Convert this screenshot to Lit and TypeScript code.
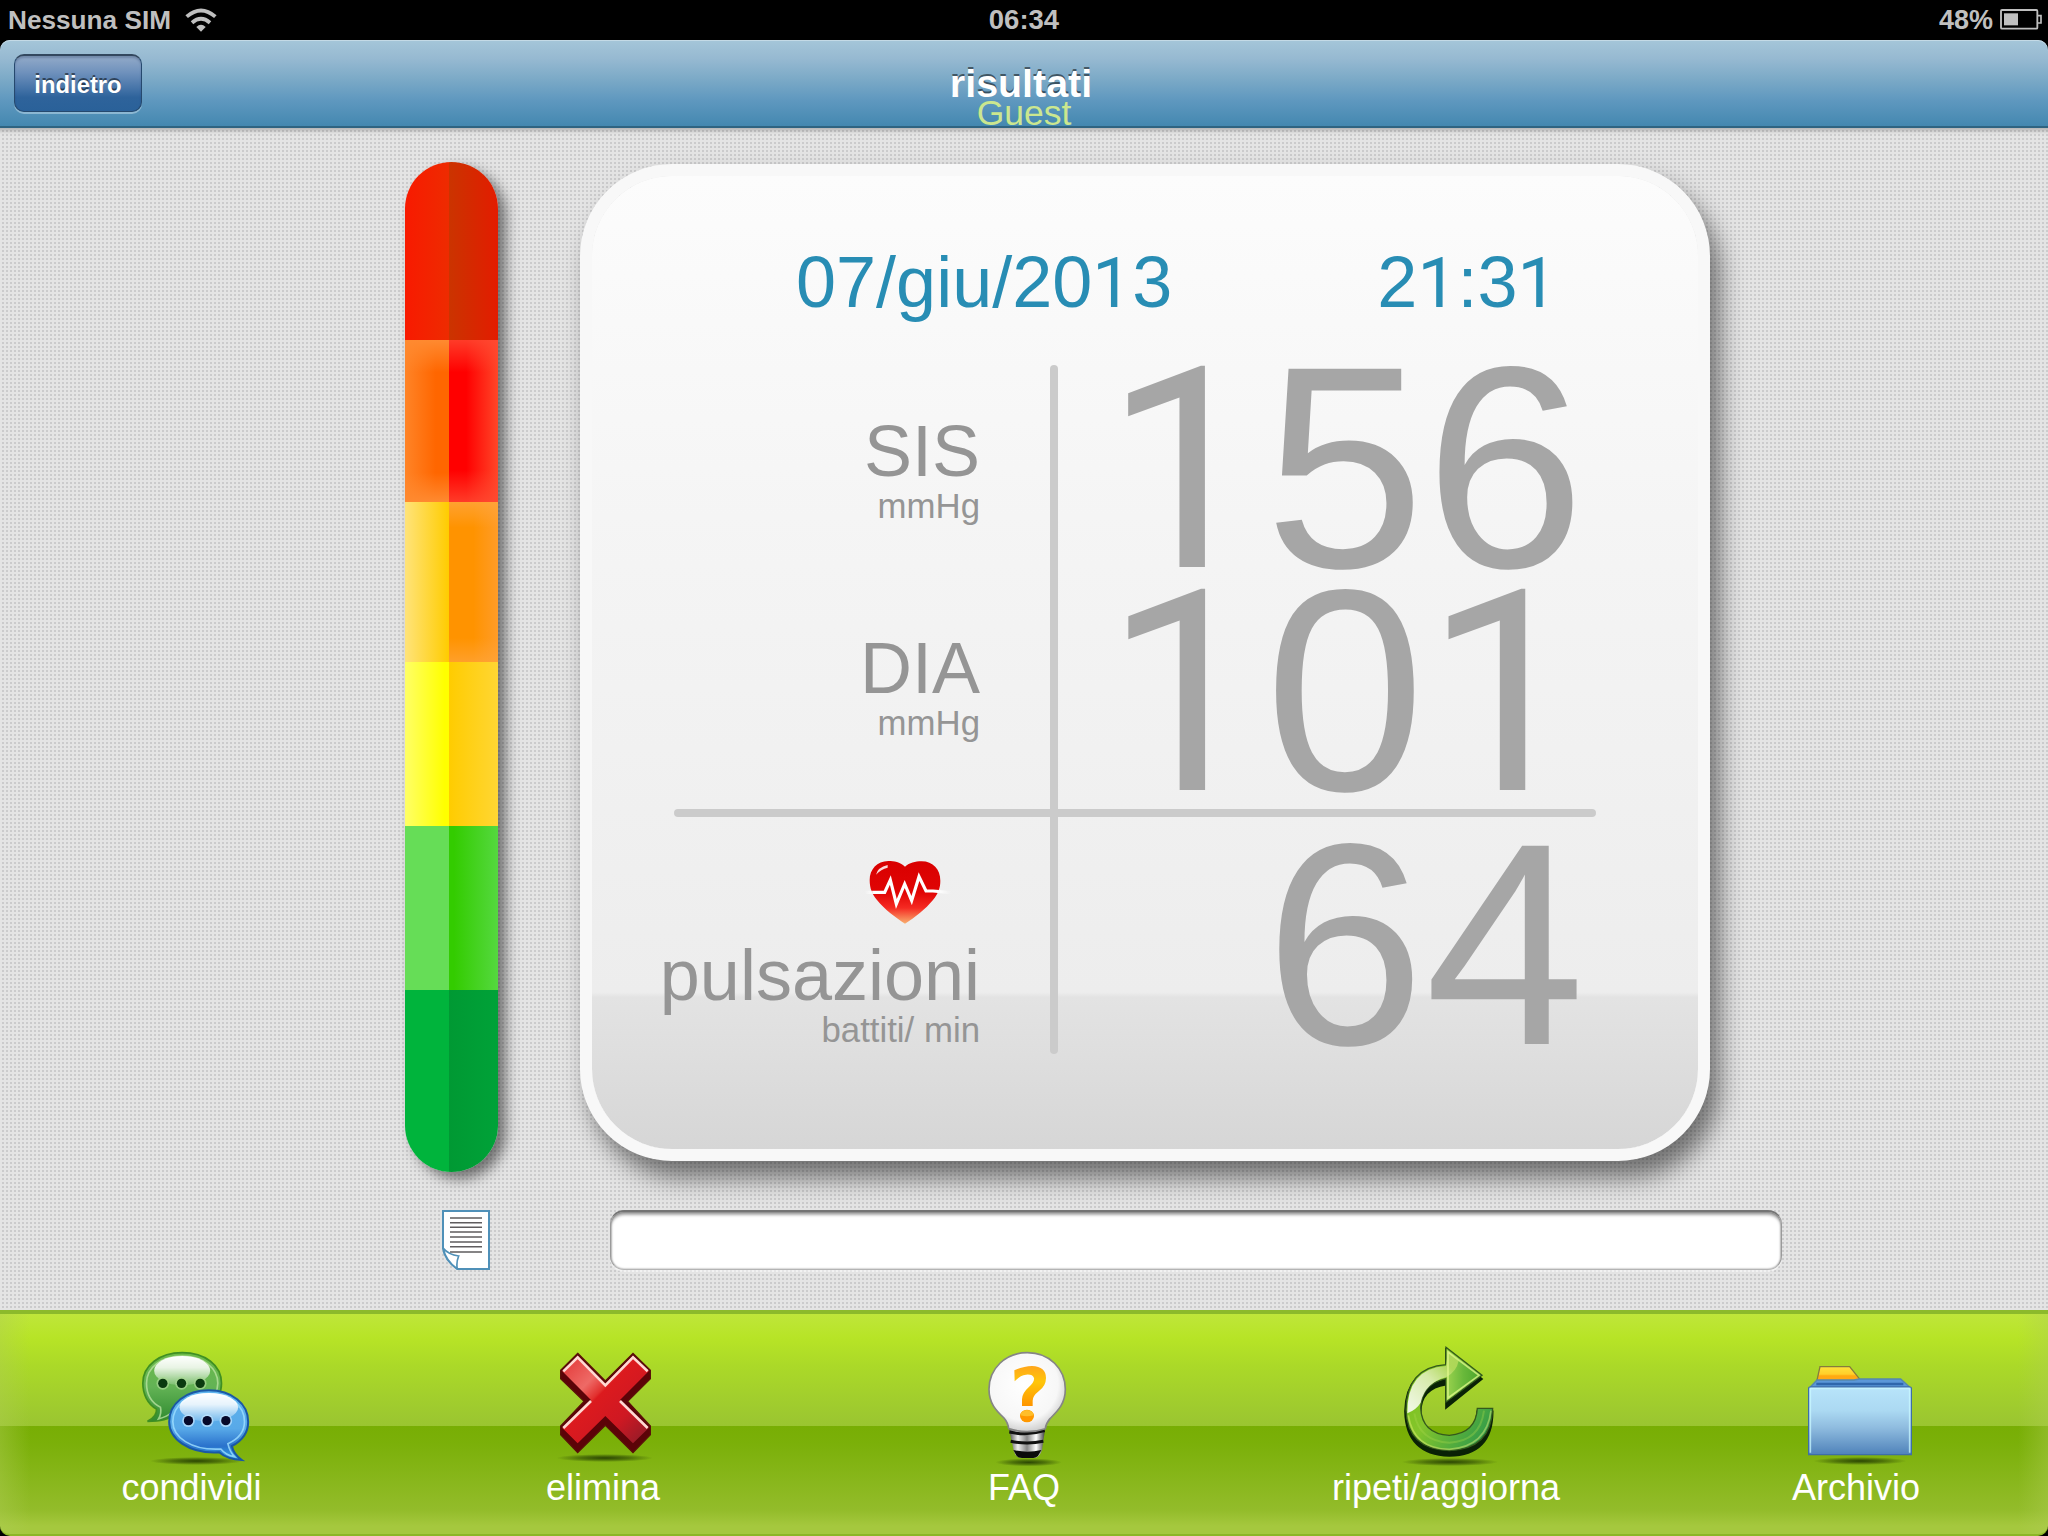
import { LitElement, html, css, svg, type TemplateResult } from "lit";
import { customElement, property } from "lit/decorators.js";

const SANS = css`"Liberation Sans", Arial, Helvetica, sans-serif`;

/** Sets the digit one in a face that draws it without a foot. */
const figures = (text: string): TemplateResult =>
  html`${[...text].map((c) => (c === "1" ? html`<span class="one">1</span>` : c))}`;

@customElement("status-bar")
class StatusBar extends LitElement {
  static styles = css`
    :host {
      display: grid;
      grid-template-columns: 1fr auto 1fr;
      align-items: center;
      height: 40px;
      background: #000;
      color: #bfbfbf;
      font: bold 26.2px/40px ${SANS};
      padding: 0 6px 0 8px;
      box-sizing: border-box;
    }
    .side { display: flex; align-items: center; }
    .right { justify-content: flex-end; font-size: 27px; }
    .clock { font-size: 27.5px; line-height: 38px; margin-right: 2px; }
    .wifi { width: 32px; height: 24px; margin-left: 14px; }
    .battery { width: 42px; height: 21px; margin-left: 7px; margin-top: -2px; }
  `;
  render() {
    return html`
      <div class="side">
        <span>Nessuna SIM</span>
        <svg class="wifi" viewBox="558 22 96 72" fill="none" stroke="#bfbfbf" stroke-width="11.5">
          <path d="M563 48 Q606 11 649 48" />
          <path d="M579 66 Q606 43 633 66" />
          <path d="M606 93 L592 79 Q606 66 620 79Z" fill="#bfbfbf" stroke="none" />
        </svg>
      </div>
      <div class="clock">06:34</div>
      <div class="side right">
        <span>48%</span>
        <svg class="battery" viewBox="456 26 126 63">
          <rect x="459" y="29" width="109" height="56" rx="3" fill="none" stroke="#bfbfbf" stroke-width="5.5" />
          <rect x="468" y="39" width="42" height="36" fill="#bfbfbf" />
          <path d="M570 46h9v22h-9" fill="none" stroke="#bfbfbf" stroke-width="5" />
        </svg>
      </div>
    `;
  }
}

@customElement("nav-bar")
class NavBar extends LitElement {
  static styles = css`
    :host { display: block; background: #000; }
    .bar {
      display: grid;
      grid-template-columns: 1fr auto 1fr;
      height: 88px;
      box-sizing: border-box;
      padding: 0 20px 0 14px;
      border-radius: 10px 10px 0 0;
      border-bottom: 2px solid #2f6481;
      background: linear-gradient(#a5c6d9 0%, #96b9d1 22%, #7caac7 45%, #5f98bf 70%, #4488b0 100%);
      box-shadow: inset 0 1px 0 #c4dae6;
      font-family: ${SANS};
    }
    .back {
      justify-self: start;
      margin-top: 14px;
      width: 128px;
      height: 58px;
      padding: 2px 0 0;
      border: 1px solid #26496e;
      border-top: 2px solid #33485f;
      border-radius: 10px;
      background: linear-gradient(#93abc9 0%, #6f91bc 30%, #4775a9 58%, #2e639b 75%, #2a6199 100%);
      box-shadow: 0 2px 0 rgba(180, 210, 228, 0.6), inset 0 2px 2px rgba(20, 40, 80, 0.25);
      color: #fff;
      font: bold 23.8px/48px ${SANS};
      text-shadow: 0 -2px 0 rgba(0, 0, 0, 0.5);
    }
    .heading { display: flex; flex-direction: column; align-items: center; padding-top: 19px; }
    .title {
      margin: 0;
      color: #fff;
      font-size: 39.4px;
      line-height: 48px;
      font-weight: bold;
      text-shadow: 0 -2px 0 rgba(0, 0, 0, 0.5);
    }
    .user { margin: -12px -6px 0 0; color: #cbe78f; font-size: 35.5px; line-height: 36px; }
  `;
  render() {
    return html`<div class="bar">
      <button class="back">indietro</button>
      <div class="heading">
        <h1 class="title">risultati</h1>
        <div class="user">Guest</div>
      </div>
    </div>`;
  }
}

@customElement("pressure-scale")
class PressureScale extends LitElement {
  static styles = css`
    :host { display: block; width: 93px; height: 1010px; }
    .scale {
      display: grid;
      grid-template-rows: 178px 162px 160px 164px 164px 182px;
      height: 100%;
      border-radius: 47px;
      overflow: hidden;
    }
    .frame { height: 100%; border-radius: 47px; box-shadow: 8px 7px 13px rgba(0, 0, 0, 0.5); }
    .band { display: grid; grid-template-columns: 44px 49px; }
    .b1 .l { background: linear-gradient(90deg, #f81a00, #ee2b00); }
    .b1 .r { background: linear-gradient(90deg, #cb3400, #d42a00 40%, #e31c00); }
    .b2 .l {
      background:
        linear-gradient(#ff8a30, transparent 20% 82%, #ff8a30),
        linear-gradient(90deg, #ff8427, #ff6600 70%);
    }
    .b2 .r {
      background:
        linear-gradient(rgba(255, 74, 50, 0.8), transparent 20% 80%, rgba(255, 74, 50, 0.8)),
        linear-gradient(90deg, #ff0000 35%, #ff4628);
    }
    .b3 .l { background: linear-gradient(90deg, #ffe37a, #ffcc00); }
    .b3 .r {
      background:
        linear-gradient(rgba(255, 165, 60, 0.8), transparent 16% 85%, rgba(255, 165, 60, 0.7)),
        linear-gradient(90deg, #ff9300 50%, #ff9c28);
    }
    .b4 .l { background: linear-gradient(90deg, #ffff66, #ffff00 90%); }
    .b4 .r { background: linear-gradient(90deg, #ffcc00, #ffd633); }
    .b5 .l { background: #66dd57; }
    .b5 .r { background: linear-gradient(90deg, #33cc00 10%, #55d83f); }
    .b6 .l { background: #00b43c; }
    .b6 .r { background: linear-gradient(90deg, #009933, #00a238); }
  `;
  render() {
    return html`<div class="frame">
      <div class="scale">
        ${[1, 2, 3, 4, 5, 6].map(
          (n) => html`<div class="band b${n}"><div class="l"></div><div class="r"></div></div>`
        )}
      </div>
    </div>`;
  }
}

@customElement("result-card")
class ResultCard extends LitElement {
  static styles = css`
    :host { display: block; width: 1130px; height: 997px; }
    .card {
      box-sizing: border-box;
      height: 100%;
      padding: 58px 82px 0;
      border: 12px solid #f8f8f8;
      border-radius: 92px;
      background: linear-gradient(#fcfcfc 0%, #f4f4f4 40%, #ededed 83.9%, #e3e3e3 84.4%, #d6d6d6 100%) padding-box;
      background-color: #f8f8f8;
      box-shadow: 10px 17px 24px rgba(0, 0, 0, 0.5);
      font-family: ${SANS};
    }
    .one { font-family: Roboto, "Liberation Sans", sans-serif; font-size: 0.978em; line-height: 0; letter-spacing: 0.006em; }
    .when {
      display: flex;
      height: 131px;
      padding-left: 122px;
      gap: 205px;
      color: #288db4;
      font-size: 72px;
      line-height: 96px;
    }
    .grid {
      display: grid;
      grid-template-columns: 376px 8px 538px;
      grid-template-rows: 444px 8px 237px;
    }
    .vertical, .horizontal { background: #cbcbcb; border-radius: 4px; }
    .vertical { grid-area: 1 / 2 / 4 / 3; }
    .horizontal { grid-area: 2 / 1 / 3 / 4; }
    .labels { padding-right: 70px; text-align: right; color: #959595; white-space: nowrap; }
    .labels.top { grid-area: 1 / 1; padding-top: 50px; }
    .labels.bottom { grid-area: 3 / 1; padding-top: 40px; margin-left: -40px; }
    .metric { height: 217px; }
    .name { font-size: 72px; line-height: 72px; }
    .unit { font-size: 34.8px; line-height: 36px; margin: 1px 0 0 0; }
    .heart { display: block; width: 88px; height: 70px; margin: 0 29px 12px auto; }
    .values { padding-right: 11px; text-align: right; color: #a6a6a6; font-size: 288px; line-height: 223px; }
    .values.top { grid-area: 1 / 3; margin-top: -9px; }
    .values.bottom { grid-area: 3 / 3; line-height: 254px; }
  `;
  render() {
    return html`<div class="card">
      <div class="when"><span>${figures("07/giu/2013")}</span><span>${figures("21:31")}</span></div>
      <div class="grid">
        <div class="vertical"></div>
        <div class="horizontal"></div>
        <div class="labels top">
          <div class="metric"><div class="name">SIS</div><div class="unit">mmHg</div></div>
          <div class="metric"><div class="name">DIA</div><div class="unit">mmHg</div></div>
        </div>
        <div class="values top"><div>${figures("156")}</div><div>${figures("101")}</div></div>
        <div class="labels bottom">
          <svg class="heart" viewBox="670 231 264 210">
            <defs>
              <linearGradient id="h" x1="0" y1="0" x2="0" y2="1">
                <stop offset="0" stop-color="#d90000" /><stop offset=".5" stop-color="#e00505" />
                <stop offset=".75" stop-color="#f52a22" /><stop offset="1" stop-color="#f9b070" />
              </linearGradient>
              <linearGradient id="p" gradientUnits="userSpaceOnUse" x1="676" y1="0" x2="934" y2="0">
                <stop offset="0" stop-color="#fff" stop-opacity="0" /><stop offset=".1" stop-color="#fff" />
                <stop offset=".85" stop-color="#fff" /><stop offset="1" stop-color="#fff" stop-opacity="0" />
              </linearGradient>
            </defs>
            <path d="M796 260C780 246 764 243 746 243C712 244 690 268 690 300C690 325 697 342 712 360C735 388 766 412 796 431C828 411 857 388 880 360C896 340 902 324 902 302C902 268 880 244 846 244C826 244 810 248 796 260Z" fill="url(#h)" />
            <path d="M709 284Q714 262 744 255L744 263Q724 268 709 284Z" fill="#fff" opacity=".85" />
            <path d="M676 337H735L752 300L770 372L795 312L816 362L838 290L859 333H880L934 338" fill="none" stroke="url(#p)" stroke-width="9.5" />
          </svg>
          <div class="name">pulsazioni</div>
          <div class="unit">battiti/ min</div>
        </div>
        <div class="values bottom">${figures("64")}</div>
      </div>
    </div>`;
  }
}

const ground = (cx: number, cy: number, rx: number) => svg`
  <defs><radialGradient id="g"><stop offset="0" stop-color="#1c3300" stop-opacity=".85"/><stop offset=".5" stop-color="#1c3300" stop-opacity=".5"/><stop offset="1" stop-color="#1c3300" stop-opacity="0"/></radialGradient></defs>
  <ellipse cx=${cx} cy=${cy} rx=${rx} ry="12" fill="url(#g)"/>`;

const dots = (xs: number[], y: number, halo: string, ink: string) =>
  xs.map((x) => svg`<circle cx=${x} cy=${y} r="19" fill=${halo} opacity=".75"/><circle cx=${x} cy=${y} r="14" fill=${ink}/>`);

const art: Record<string, TemplateResult> = {
  share: html`<svg class="art" viewBox="400.5 129 348 372">
    ${ground(588, 483, 140)}
    <defs>
      <linearGradient id="cg" x1="0" y1="0" x2="0" y2="1"><stop offset="0" stop-color="#6cba4a" /><stop offset=".5" stop-color="#63b355" /><stop offset="1" stop-color="#2f8a30" /></linearGradient>
      <linearGradient id="cb" x1="0" y1="0" x2="0" y2="1"><stop offset="0" stop-color="#5fb4ee" /><stop offset=".55" stop-color="#58a9e8" /><stop offset=".8" stop-color="#2a72cc" /><stop offset="1" stop-color="#35a8e8" /></linearGradient>
      <linearGradient id="cw" x1="0" y1="0" x2="0" y2="1"><stop offset="0" stop-color="#fff" /><stop offset=".4" stop-color="#fff" stop-opacity=".85" /><stop offset="1" stop-color="#fff" stop-opacity=".15" /></linearGradient>
    </defs>
    <path d="M545 158C614 158 663 196 663 250C663 308 610 345 520 345Q500 364 441 364Q470 350 468 327C440 312 427 280 427 250C427 196 478 158 545 158Z" fill="url(#cg)" stroke="#3f8f22" stroke-width="5" />
    <path d="M545 168C606 168 652 203 652 250C652 300 600 334 515 336Q500 350 474 357Q484 340 480 322C450 307 438 280 438 250C438 202 484 168 545 168Z" fill="none" stroke="#bfe6a4" stroke-width="5" opacity=".75" />
    <ellipse cx="545" cy="212" rx="84" ry="44" fill="url(#cw)" />
    ${dots([487, 543, 599], 250, "#a5d691", "#0a3a10")}
    <path d="M625 271C694 271 743 311 743 365C743 397 725 422 694 438Q700 464 724 480Q680 478 656 457C562 462 506 415 506 365C506 311 556 271 625 271Z" fill="url(#cb)" stroke="#1a58a5" stroke-width="6" />
    <path d="M625 281C688 281 732 316 732 365C732 393 713 417 682 431Q688 456 702 470Q676 466 661 447C570 452 517 410 517 365C517 316 562 281 625 281Z" fill="none" stroke="#9fe0ff" stroke-width="5" opacity=".8" />
    <ellipse cx="625" cy="322" rx="88" ry="43" fill="url(#cw)" />
    ${dots([564, 620, 676], 362, "#bfe3ff", "#06092a")}
  </svg>`,
  delete: html`<svg class="art" viewBox="135 129 348 372">
    ${ground(314, 474, 145)}
    <defs>
      <linearGradient id="x" x1="0" y1="0" x2="1" y2="1"><stop offset="0" stop-color="#e23434" /><stop offset=".3" stop-color="#ee6a66" /><stop offset=".42" stop-color="#e2302e" /><stop offset=".44" stop-color="#dc1a1e" /><stop offset=".7" stop-color="#cf1822" /><stop offset="1" stop-color="#8a1c2a" /></linearGradient>
    </defs>
    <path d="M233 160L316 243L399 160L451 211V236L383 304L451 378V404L399 458L316 376L233 458L182 404V378L252 304L182 236V211Z" fill="#5c0308" stroke="#5a1208" stroke-width="4" />
    <path d="M233 168L316 251L399 168L446 214L360 300L446 384L399 430L316 348L233 430L187 384L273 300L187 214Z" fill="url(#x)" />
    <path d="M190 214L233 172L316 256L399 172L443 214M360 303L443 384M273 303L190 384" fill="none" stroke="#ffd9d3" stroke-width="8" />
  </svg>`,
  faq: html`<svg class="art" viewBox="78 129 348 372">
    ${ground(266, 487, 100)}
    <defs>
      <radialGradient id="b" cx=".45" cy=".4" r=".65"><stop offset="0" stop-color="#fff" /><stop offset=".7" stop-color="#f7f7f7" /><stop offset="1" stop-color="#c4c4c4" /></radialGradient>
      <linearGradient id="s" x1="0" y1="0" x2="1" y2="0"><stop offset="0" stop-color="#444" /><stop offset=".25" stop-color="#eee" /><stop offset=".5" stop-color="#888" /><stop offset=".75" stop-color="#fff" /><stop offset="1" stop-color="#333" /></linearGradient>
      <linearGradient id="q" x1="0" y1="0" x2="0" y2="1"><stop offset="0" stop-color="#ffa61a" /><stop offset=".4" stop-color="#ffc60a" /><stop offset="1" stop-color="#ff9500" /></linearGradient>
    </defs>
    <path d="M206 382H316L306 450Q298 474 280 474H245Q228 474 222 455Z" fill="url(#s)" />
    <path d="M208 396Q262 408 314 392M212 424Q262 434 310 424" fill="none" stroke="#111" stroke-width="9" />
    <path d="M220 450Q262 460 304 450L294 468Q288 474 280 474H246Q234 474 230 468Z" fill="#0b0b0b" />
    <path d="M262 158C328 158 376 206 376 268C376 312 352 334 330 356Q318 370 316 386Q262 404 206 386Q204 368 192 354C168 332 147 310 147 268C147 206 196 158 262 158Z" fill="url(#b)" stroke="#858585" stroke-width="5" />
    <path d="M223 211Q252 198 276 198Q318 200 318 234Q318 258 296 274Q278 288 278 302V318H246V298Q246 280 266 262Q284 246 282 234Q278 222 258 224Q240 226 224 244Z" fill="url(#q)" />
    <ellipse cx="261" cy="348" rx="21" ry="19" fill="#ff9800" /><path d="M241 346Q243 331 261 330Q279 331 281 346Q261 352 241 346Z" fill="#ffbe2a" />
  </svg>`,
  refresh: html`<svg class="art" viewBox="264 129 348 372">
    ${ground(450, 486, 145)}
    <defs>
      <linearGradient id="r" gradientUnits="userSpaceOnUse" x1="330" y1="250" x2="570" y2="400"><stop offset="0" stop-color="#7cc21c" /><stop offset=".35" stop-color="#84c52c" /><stop offset="1" stop-color="#2f9a4a" /></linearGradient>
      <linearGradient id="w" gradientUnits="userSpaceOnUse" x1="330" y1="320" x2="450" y2="200"><stop offset="0" stop-color="#fbfdf6" /><stop offset=".6" stop-color="#e0efb8" /><stop offset="1" stop-color="#b2d95a" /></linearGradient>
      <linearGradient id="k" x1="0" y1="0" x2="1" y2="0"><stop offset="0" stop-color="#9ad24e" /><stop offset=".5" stop-color="#68b83a" /><stop offset="1" stop-color="#4aa52c" /></linearGradient>
    </defs>
    <path d="M438 148L546 237L438 324V254Q362 266 362 336Q368 410 448 412Q526 410 532 334H578Q578 466 448 468Q318 464 315 334Q318 206 438 200Z" fill="#0a2206" stroke="#0a2206" stroke-width="5" />
    <path d="M438 142L546 226L438 306V236Q364 252 362 324Q366 402 448 406Q528 400 532 325H578Q574 448 448 452Q322 448 318 330Q320 202 438 194Z" fill="url(#r)" stroke="#34591c" stroke-width="4" />
    <path d="M440 148L542 226L440 302Z" fill="url(#k)" />
    <path d="M322 340Q320 206 438 198L444 152L476 182Q470 214 438 232Q376 248 362 308Q350 328 322 340Z" fill="url(#w)" opacity=".9" />
    <path d="M325 346Q340 446 448 448Q560 440 573 332" fill="none" stroke="#eaf57a" stroke-width="5" opacity=".45" />
    <path d="M343 340Q358 424 448 428Q540 424 552 332" fill="none" stroke="#a5d84a" stroke-width="6" opacity=".35" />
    <path d="M444 294V156L537 226Z" fill="none" stroke="#e4fa8c" stroke-width="5" opacity=".75" />
  </svg>`,
  archive: html`<svg class="art" viewBox="150 129 348 372">
    ${ground(336, 483, 140)}
    <defs>
      <linearGradient id="f" x1="0" y1="0" x2="0" y2="1"><stop offset="0" stop-color="#b8e4fa" /><stop offset=".35" stop-color="#abd9f2" /><stop offset=".6" stop-color="#8fbcdf" /><stop offset="1" stop-color="#4f82ba" /></linearGradient>
      <linearGradient id="t" x1="0" y1="0" x2="0" y2="1"><stop offset="0" stop-color="#ffe23c" /><stop offset=".45" stop-color="#ffcf2a" /><stop offset=".55" stop-color="#ffaa10" /><stop offset="1" stop-color="#ffa51e" /></linearGradient>
    </defs>
    <path d="M206 245L216 200H305L334 236V250H206Z" fill="url(#t)" stroke="#857c3c" stroke-width="4" />
    <path d="M184 264L207 240H318L334 237H458L488 264Z" fill="#5b97d8" stroke="#5688ac" stroke-width="4" />
    <path d="M205 252H466" stroke="#2f67ac" stroke-width="7" />
    <path d="M182 266Q182 261 190 261H482Q490 261 490 266V464H182Z" fill="url(#f)" stroke="#3e6ea8" stroke-width="4" />
    <path d="M187 458V265H485V458" fill="none" stroke="#c9f8ff" stroke-width="5" opacity=".75" />
  </svg>`,
};

@customElement("tool-item")
class ToolItem extends LitElement {
  @property() label = "";
  @property() icon = "";
  static styles = css`
    :host { display: flex; flex-direction: column; align-items: center; padding-top: 29px; }
    .art { display: block; width: 116px; height: 124px; }
    .label { margin-top: 3px; color: #fff; font: 36px/36px ${SANS}; white-space: nowrap; }
  `;
  render() {
    return html`${art[this.icon]}<div class="label">${this.label}</div>`;
  }
}

@customElement("app-root")
class AppRoot extends LitElement {
  static styles = css`
    :host { display: flex; flex-direction: column; width: 2048px; height: 1536px; overflow: hidden; background: #000; }
    .stage {
      height: 1182px;
      box-sizing: border-box;
      padding: 34px 0 0 405px;
      background:
        linear-gradient(rgba(0, 0, 0, 0.2), transparent 6px),
        conic-gradient(transparent 25%, #cbcbcc 0 50%, transparent 0) 0 0 / 4px 4px,
        #e4e4e4;
    }
    .results { display: flex; height: 1010px; gap: 82px; }
    .results result-card { margin-top: 2px; }
    .notes { display: flex; margin-top: 38px; padding-left: 37px; gap: 120px; }
    .page { width: 48px; height: 60px; }
    .field {
      box-sizing: border-box;
      width: 1172px;
      height: 60px;
      border: 1px solid #9a9a9a;
      border-top: 2px solid #747474;
      border-bottom-color: #b4b4b4;
      border-radius: 14px;
      background: #fff;
      box-shadow: inset 0 3px 3px rgba(0, 0, 0, 0.35), inset 0 0 2px rgba(0, 0, 0, 0.5), 0 2px 0 rgba(255, 255, 255, 0.5);
      outline: none;
    }
    .tools {
      display: grid;
      grid-template-columns: 383px 440px 402px 442px 378px;
      box-sizing: border-box;
      height: 226px;
      border-top: 4px solid #8cba2b;
      border-bottom: 2px solid #8cb626;
      border-radius: 0 0 10px 10px;
      background:
        linear-gradient(90deg, rgba(175, 205, 85, 0.4), transparent 30px, transparent 2018px, rgba(175, 205, 85, 0.4)),
        linear-gradient(#bfe63a 0, #b7e426 24px, #abd928 52px, #9ac531 112px, #78ae04 112px, #7bb009 130px, #93bc2a 196px, #a5c83e 212px, #a5c83e 220px);
    }
  `;
  render() {
    return html`
      <status-bar></status-bar>
      <nav-bar></nav-bar>
      <main class="stage">
        <div class="results">
          <pressure-scale></pressure-scale>
          <result-card></result-card>
        </div>
        <div class="notes">
          <svg class="page" viewBox="186 1290 144 180">
            <path d="M189 1293H327V1467H232Q194 1440 189 1405Z" fill="#fff" stroke="#4f90b8" stroke-width="6" />
            <path d="M210 1314H306M210 1328H306M210 1342H306M210 1356H306M210 1371H306M210 1386H306M210 1400H306M210 1416H306" stroke="#5f5c5e" stroke-width="4.5" />
            <path d="M190 1405Q205 1424 236 1428Q228 1448 232 1467Q196 1440 190 1405Z" fill="#fff" stroke="#4f90b8" stroke-width="5" />
          </svg>
          <input class="field" type="text" />
        </div>
      </main>
      <nav class="tools">
        <tool-item icon="share" label="condividi"></tool-item>
        <tool-item icon="delete" label="elimina"></tool-item>
        <tool-item icon="faq" label="FAQ"></tool-item>
        <tool-item icon="refresh" label="ripeti/aggiorna"></tool-item>
        <tool-item icon="archive" label="Archivio"></tool-item>
      </nav>
    `;
  }
}
